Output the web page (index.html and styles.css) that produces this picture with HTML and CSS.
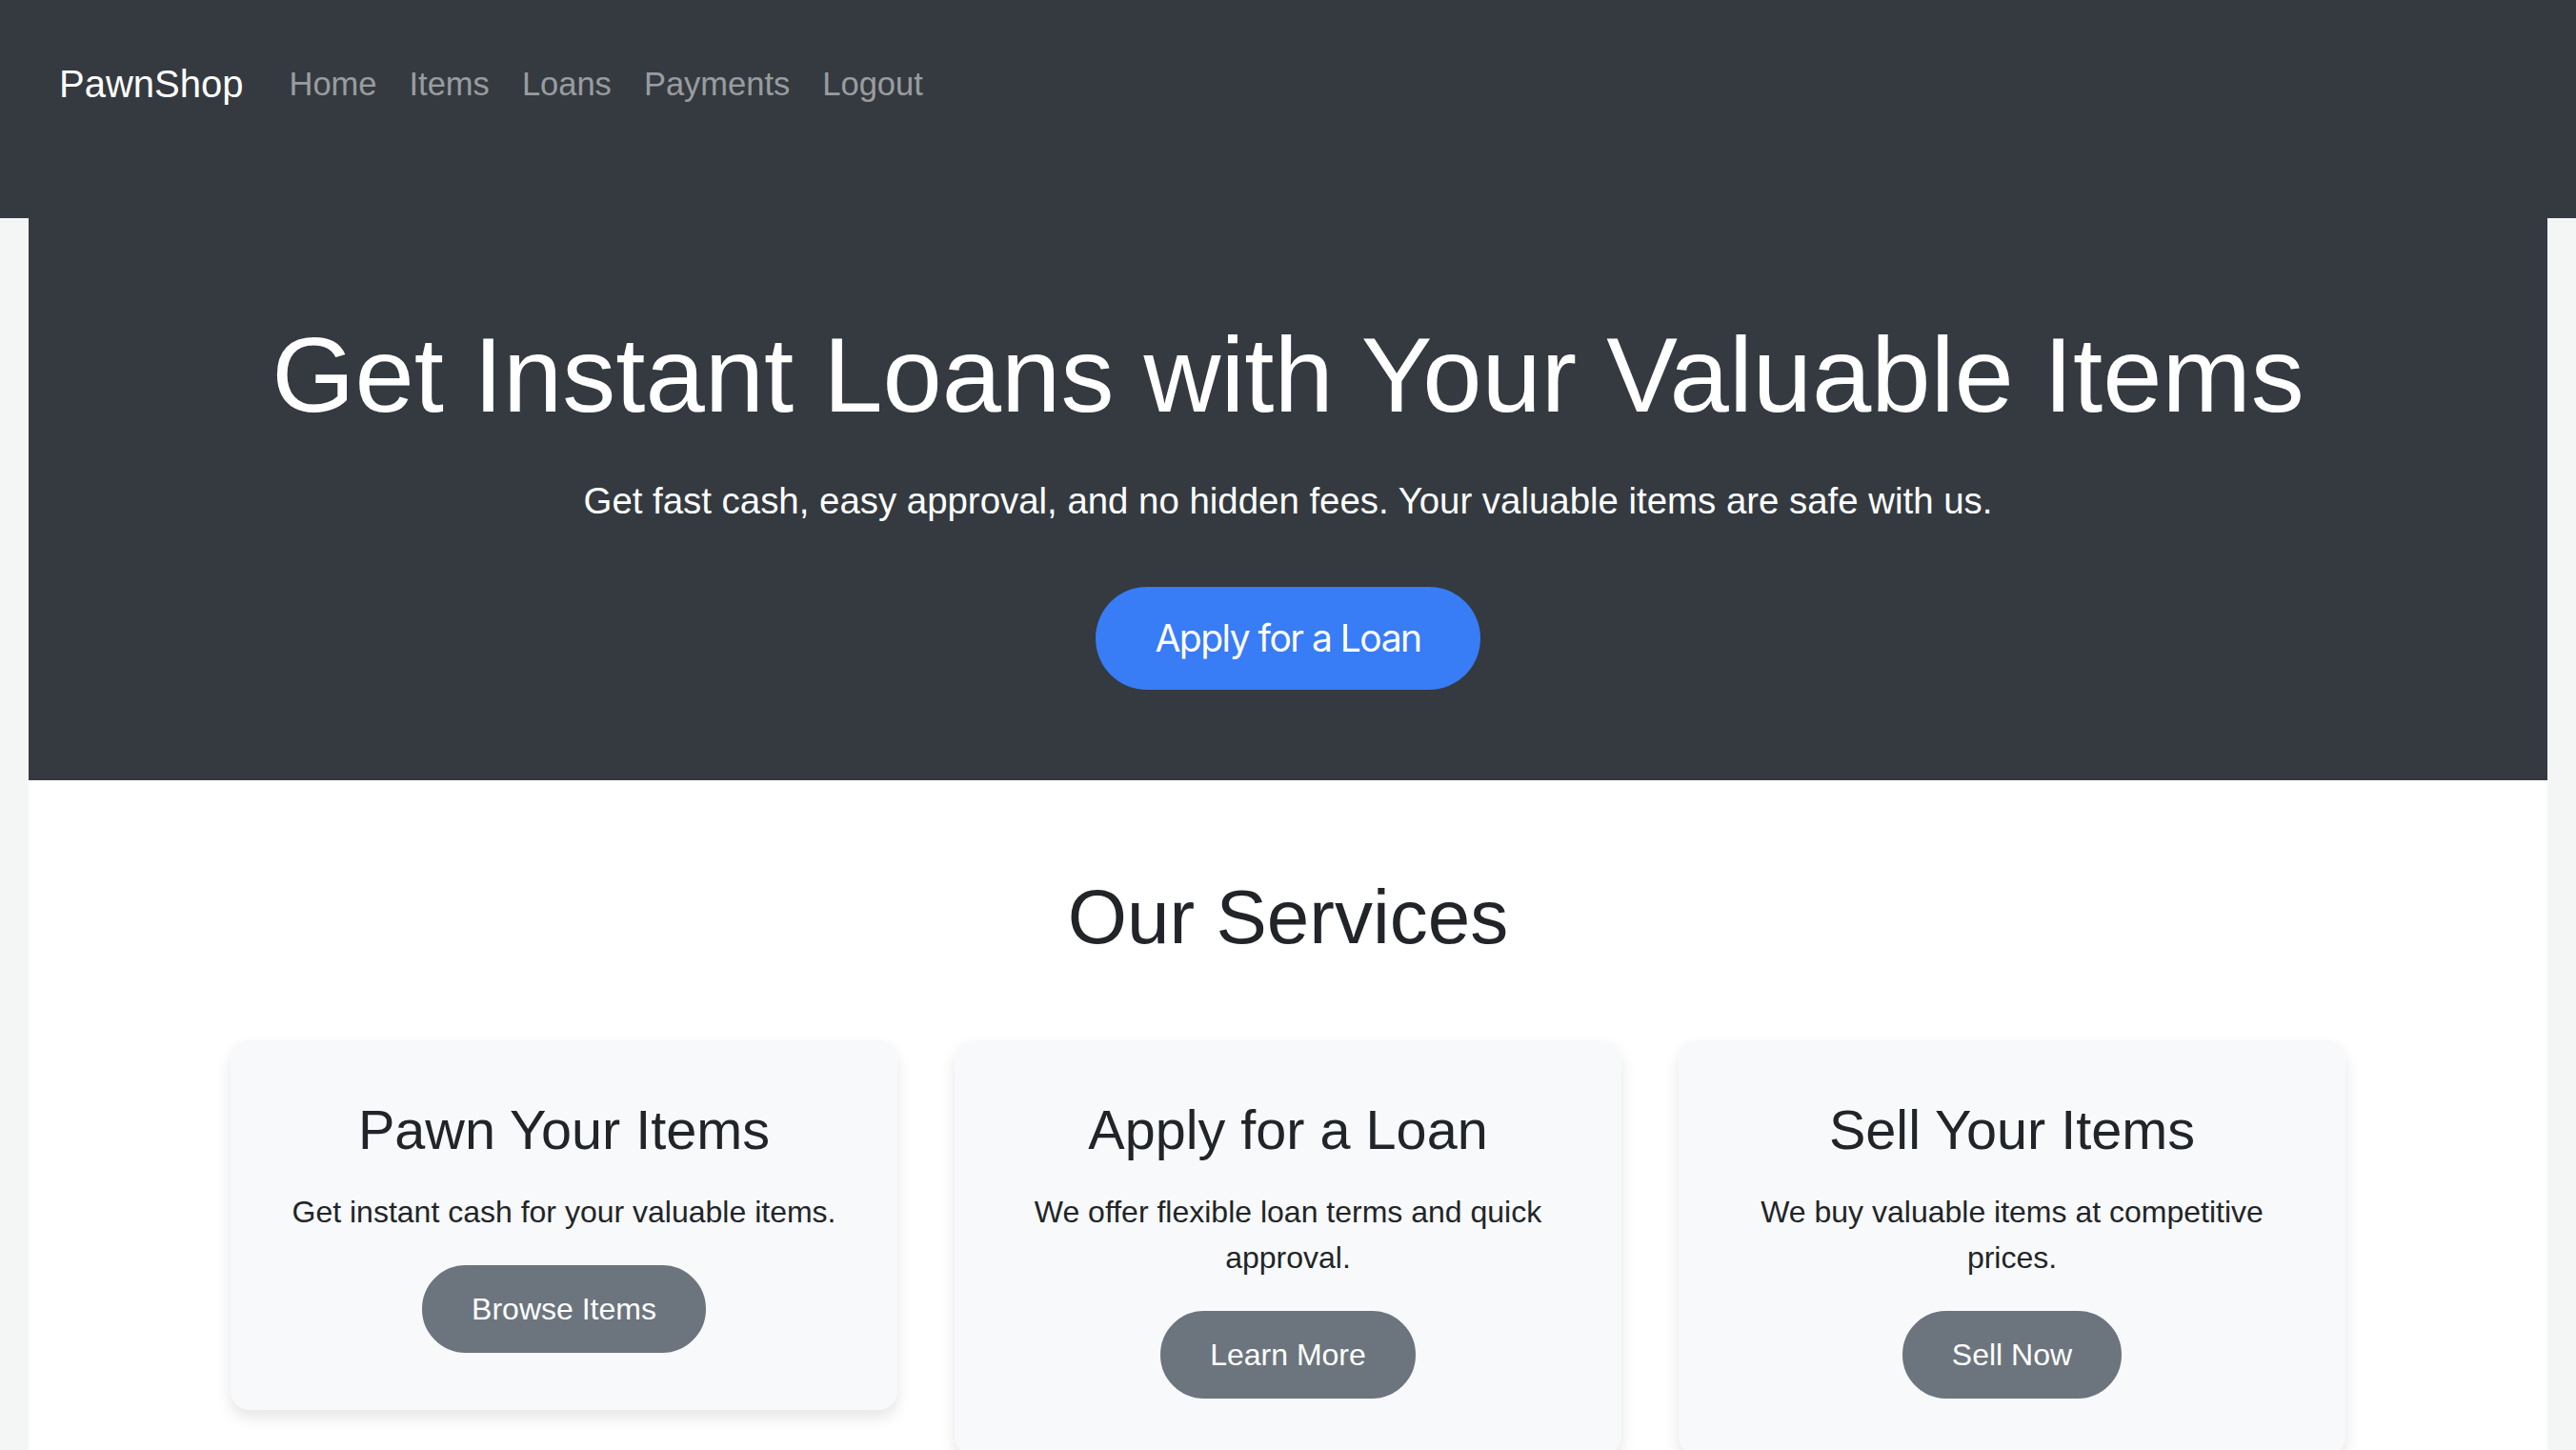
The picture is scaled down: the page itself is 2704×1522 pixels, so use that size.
FILE: index.html
```html
<!DOCTYPE html>
<html lang="en">
<head>
<meta charset="utf-8">
<title>PawnShop</title>
<link rel="stylesheet" href="styles.css">
</head>
<body>
<nav class="navbar">
  <a class="brand" href="#">PawnShop</a>
  <ul class="nav-links">
    <li><a href="#">Home</a></li>
    <li><a href="#">Items</a></li>
    <li><a href="#">Loans</a></li>
    <li><a href="#">Payments</a></li>
    <li><a href="#">Logout</a></li>
  </ul>
</nav>
<main class="main">
  <section class="hero">
    <h1 class="hero-title">Get Instant Loans with Your Valuable Items</h1>
    <p class="hero-lead">Get fast cash, easy approval, and no hidden fees. Your valuable items are safe with us.</p>
    <a class="btn-primary" href="#">Apply for a Loan</a>
  </section>
  <section class="services">
    <h2 class="services-title">Our Services</h2>
    <div class="cards">
      <div class="card">
        <h3 class="card-title">Pawn Your Items</h3>
        <p class="card-text">Get instant cash for your valuable items.</p>
        <a class="btn-secondary" href="#">Browse Items</a>
      </div>
      <div class="card">
        <h3 class="card-title">Apply for a Loan</h3>
        <p class="card-text">We offer flexible loan terms and quick approval.</p>
        <a class="btn-secondary" href="#">Learn More</a>
      </div>
      <div class="card">
        <h3 class="card-title">Sell Your Items</h3>
        <p class="card-text">We buy valuable items at competitive prices.</p>
        <a class="btn-secondary" href="#">Sell Now</a>
      </div>
    </div>
  </section>
</main>
</body>
</html>
```

FILE: styles.css
```css
* { box-sizing: border-box; }

body {
  margin: 0;
  background: #f4f6f5;
  font-family: "Liberation Sans", Arial, Helvetica, sans-serif;
  color: #212529;
}

.navbar {
  background: #343a40;
  height: 229px;
  padding: 58px 62px 0;
  display: flex;
  align-items: flex-start;
}

.brand {
  color: #fff;
  text-decoration: none;
  font-size: 40px;
  line-height: 60px;
  margin-right: 31px;
}

.nav-links {
  list-style: none;
  margin: 0;
  padding: 0;
  display: flex;
  height: 60px;
  align-items: center;
}

.nav-links a {
  display: block;
  padding: 0 17px;
  font-size: 34.5px;
  line-height: 50px;
  color: rgba(255, 255, 255, 0.5);
  text-decoration: none;
}

.main {
  margin: 0 30px;
  background: #fff;
  min-height: 1293px;
}

.hero {
  background: #343a40;
  color: #fff;
  padding: 98px 0 95px;
  display: flex;
  flex-direction: column;
  align-items: center;
  text-align: center;
}

.hero-title {
  margin: 0 0 35px;
  font-size: 112px;
  font-weight: 400;
  line-height: 1.2;
}

.hero-lead {
  margin: 0 0 60px;
  font-size: 38.4px;
  line-height: 60px;
}

.btn-primary {
  display: block;
  background: #387cf6;
  color: #fff;
  text-decoration: none;
  font-family: Inter, "Liberation Sans", sans-serif;
  font-size: 39px;
  letter-spacing: -1.5px;
  line-height: 60px;
  padding: 24px 62px;
  border-radius: 60px;
}

.services {
  max-width: 2280px;
  margin: 0 auto;
  padding: 96px 30px 0;
}

.services-title {
  margin: 0 0 81px;
  font-size: 80px;
  font-weight: 400;
  line-height: 1.2;
  text-align: center;
}

.cards {
  display: grid;
  grid-template-columns: repeat(3, 1fr);
  gap: 60px;
  align-items: start;
}

.card {
  background: #f8f9fa;
  border-radius: 20px;
  box-shadow: 0 8px 16px rgba(0, 0, 0, 0.1);
  padding: 60px;
  display: flex;
  flex-direction: column;
  align-items: center;
  text-align: center;
}

.card-title {
  margin: 0 0 26px;
  font-size: 57.6px;
  font-weight: 400;
  line-height: 1.2;
}

.card-text {
  margin: 0 0 32px;
  font-size: 32px;
  line-height: 48px;
}

.btn-secondary {
  display: block;
  background: #6c757d;
  border: 2px solid #6c757d;
  color: #fff;
  text-decoration: none;
  font-size: 32px;
  line-height: 48px;
  padding: 20px 50px;
  border-radius: 50px;
}
```
